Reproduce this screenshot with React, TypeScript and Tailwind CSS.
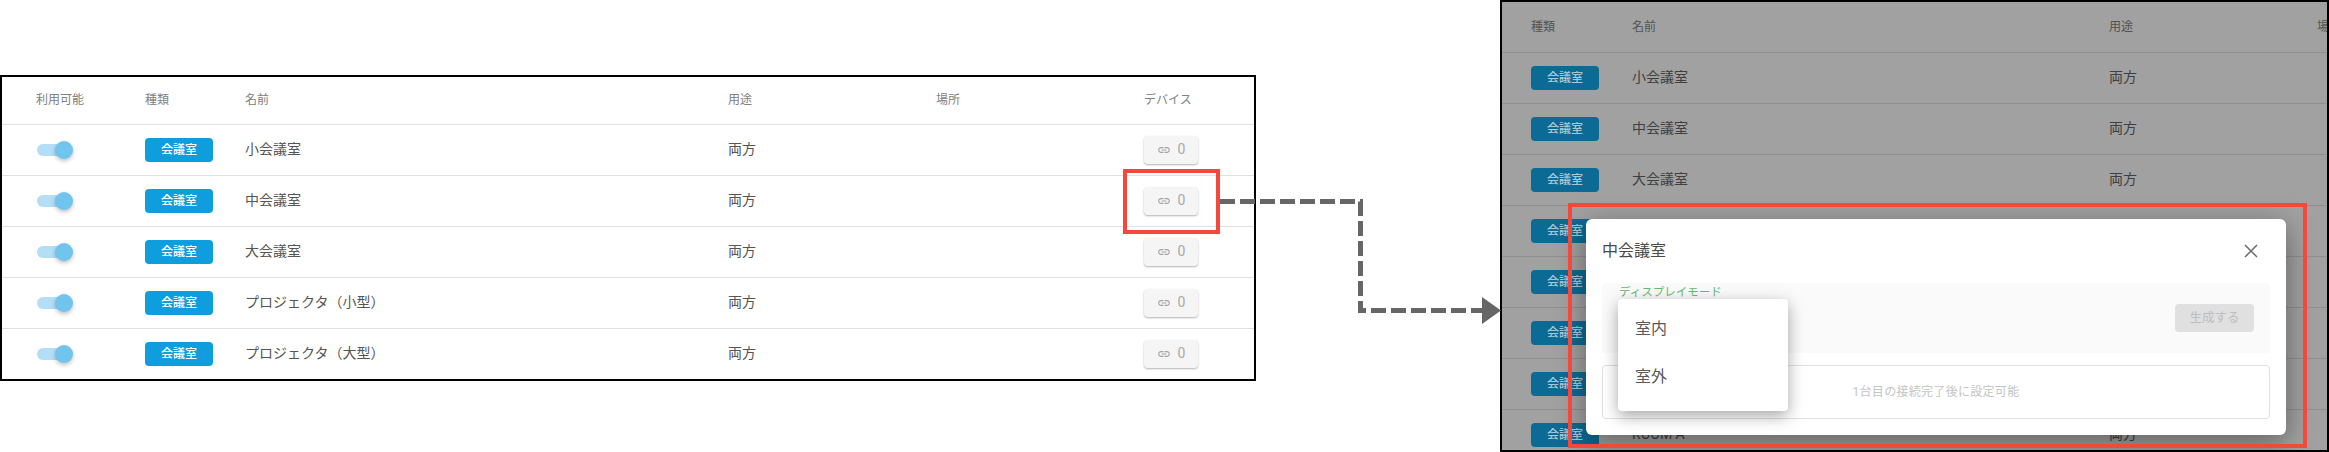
const font = "font-['Roboto','Noto_Sans_CJK_JP',sans-serif]";

const names = ['小会議室', '中会議室', '大会議室', 'プロジェクタ（小型）', 'プロジェクタ（大型）'];
const dimmedRows = [
  { name: '小会議室', use: '両方' },
  { name: '中会議室', use: '両方' },
  { name: '大会議室', use: '両方' },
  { name: '', use: '' },
  { name: '', use: '' },
  { name: '', use: '' },
  { name: '', use: '' },
  { name: 'ROOM A', use: '両方' },
];

function LinkIcon() {
  return (
    <svg width="14" height="14" viewBox="0 0 24 24" fill="#a3a3a3" aria-hidden="true">
      <path d="M3.9 12c0-1.71 1.39-3.1 3.1-3.1h4V7H7c-2.76 0-5 2.24-5 5s2.24 5 5 5h4v-1.9H7c-1.71 0-3.1-1.39-3.1-3.1zM8 13h8v-2H8v2zm9-6h-4v1.9h4c1.71 0 3.1 1.39 3.1 3.1s-1.39 3.1-3.1 3.1h-4V17h4c2.76 0 5-2.24 5-5s-2.24-5-5-5z" />
    </svg>
  );
}

function Toggle() {
  return (
    <div className="relative h-[18px] w-[36px]">
      <div className="absolute left-0 top-[3px] h-[12px] w-[30px] rounded-full bg-[#b3def5]" />
      <div className="absolute right-0 top-0 h-[18px] w-[18px] rounded-full bg-[#70c4ee] shadow-[0_2px_4px_rgba(0,0,0,0.25)]" />
    </div>
  );
}

function Badge({ dim }: { dim?: boolean }) {
  return (
    <div
      className={`flex h-[24px] w-[68px] items-center justify-center rounded-[4px] text-[12px] font-medium ${
        dim ? 'bg-[#0c6b95] text-[#a9c6d4]' : 'bg-[#0e9ddd] text-white'
      }`}
    >
      会議室
    </div>
  );
}

function LeftTable() {
  return (
    <div className="h-[306px] w-[1256px] overflow-hidden border-2 border-black bg-white">
      <div className="grid h-[47px] grid-cols-[143px_100px_483px_208px_208px_1fr] items-center pb-[1px] text-[12px] text-[#808080]">
        <div className="pl-[34px]">利用可能</div>
        <div>種類</div>
        <div>名前</div>
        <div>用途</div>
        <div>場所</div>
        <div>デバイス</div>
      </div>
      {names.map((n) => (
        <div
          key={n}
          className="grid h-[51px] grid-cols-[143px_100px_483px_208px_208px_1fr] items-center border-t border-[#e0e0e0] pb-[1px] text-[14px] text-[#555555]"
        >
          <div className="pl-[35px]">
            <Toggle />
          </div>
          <div>
            <Badge />
          </div>
          <div>{n}</div>
          <div>両方</div>
          <div />
          <div>
            <div className="flex h-[28px] w-[54px] items-center justify-center gap-[7px] rounded-[4px] bg-[#f5f5f5] text-[14px] text-[#a8a8a8] shadow-[0_1px_2px_rgba(0,0,0,0.3)]">
              <LinkIcon />
              <span>0</span>
            </div>
          </div>
        </div>
      ))}
    </div>
  );
}

function RightPanel() {
  return (
    <div className="relative h-[452px] w-[829px] overflow-hidden border-2 border-black bg-[#a1a1a1]">
      <div className="grid h-[50px] grid-cols-[101px_477px_208px_1fr] items-center whitespace-nowrap pb-[1px] pl-[29px] text-[12px] text-[#525252]">
        <div>種類</div>
        <div>名前</div>
        <div>用途</div>
        <div>場所</div>
      </div>
      {dimmedRows.map((r, i) => (
        <div
          key={i}
          className="grid h-[51px] grid-cols-[101px_477px_208px_1fr] items-center border-t border-[#8f8f8f] pb-[1px] pl-[29px] text-[14px] text-[#3f3f3f]"
        >
          <div>
            <Badge dim />
          </div>
          <div>{r.name}</div>
          <div>{r.use}</div>
          <div />
        </div>
      ))}

      <div className="absolute left-[84px] top-[217px] h-[216px] w-[700px] rounded-[6px] bg-white px-[16px] shadow-[0_8px_30px_rgba(0,0,0,0.4)]">
        <div className="flex h-[64px] items-center justify-between">
          <div className="text-[16px] text-[#4a4a4a]">中会議室</div>
          <svg className="mr-[11px]" width="16" height="16" viewBox="0 0 16 16" fill="none" stroke="#6b6b6b" strokeWidth="1.5" aria-hidden="true">
            <path d="M2 2l12 12M14 2L2 14" />
          </svg>
        </div>
        <div className="relative flex h-[70px] items-center justify-end rounded-[4px] bg-[#fafafa] pr-[16px]">
          <div className="absolute left-[17px] top-[1px] text-[11.5px] leading-[16px] text-[#66bb6a]">ディスプレイモード</div>
          <div className="flex h-[28px] w-[79px] items-center justify-center rounded-[4px] bg-[#e0e0e0] text-[12.5px] text-[#bdbdbd]">
            生成する
          </div>
          <div className="absolute left-[16px] top-[16px] flex h-[112px] w-[170px] flex-col justify-center rounded-[4px] bg-white pb-[4px] pl-[17px] text-[16px] text-[#5a5a5a] shadow-[0_5px_16px_rgba(0,0,0,0.35)]">
            <div className="flex h-[48px] items-center">室内</div>
            <div className="flex h-[48px] items-center">室外</div>
          </div>
        </div>
        <div className="mt-[12px] flex h-[54px] items-center justify-center rounded-[4px] border border-[#e0e0e0] text-[12px] tracking-[0.3px] text-[#c4c4c4]">
          1台目の接続完了後に設定可能
        </div>
      </div>
    </div>
  );
}

export default function App() {
  return (
    <div className={`relative h-[452px] w-[2329px] overflow-hidden bg-white ${font}`}>
      <div className="flex h-full items-start justify-between">
        <div className="pt-[75px]">
          <LeftTable />
        </div>
        <RightPanel />
      </div>

      {/* annotations drawn over the two screenshots */}
      <div className="absolute left-[1123px] top-[169px] h-[65px] w-[97px] border-4 border-[#f4483b]" />
      <div className="absolute left-[1568px] top-[203px] h-[245px] w-[739px] border-[4px] border-[#f4483b]" />
      <svg className="absolute left-[1220px] top-[190px]" width="285" height="140" viewBox="0 0 285 140" aria-hidden="true">
        <path d="M0 11.5H140.5V120.5H265" fill="none" stroke="#666666" strokeWidth="5" strokeDasharray="15 5" />
        <path d="M262 107L281 120.5L262 134Z" fill="#666666" />
      </svg>
    </div>
  );
}
